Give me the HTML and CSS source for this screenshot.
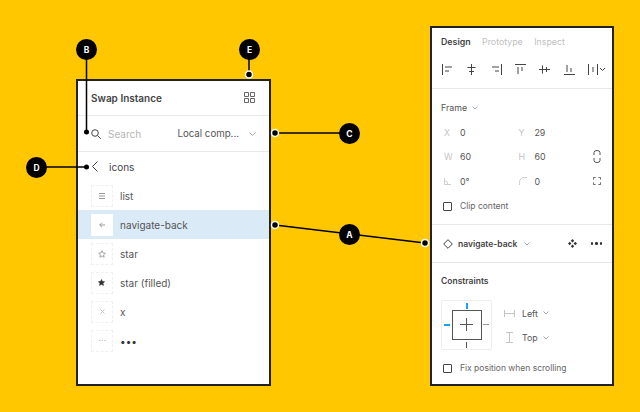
FILE: index.html
```html
<!DOCTYPE html>
<html lang="en">
<head>
<meta charset="utf-8">
<title>Swap Instance</title>
<link rel="stylesheet" href="styles.css">
</head>
<body>
<main class="canvas">
  <section class="panel swap">
    <header class="swap-head">
      <h2>Swap Instance</h2>
      <svg class="grid-icon" width="11" height="11" viewBox="0 0 11 11"><path d="M.5.5h4v4h-4zM6.500.5h4v4h-4zM.5 6.500h4v4h-4zM6.500 6.500h4v4h-4z"/></svg>
    </header>
    <div class="swap-search">
      <svg class="search-icon" width="10" height="10" viewBox="0 0 10 10"><circle cx="4" cy="4" r="3.300"/><path d="M6.500 6.500l3.300 3.300"/></svg>
      <span class="placeholder">Search</span>
      <span class="library">Local comp...</span>
      <svg class="chev" width="7" height="4" viewBox="0 0 7 4"><path d="M.5.5l3 3 3-3"/></svg>
    </div>
    <div class="back-row">
      <svg class="back-icon" width="6" height="11" viewBox="0 0 6 11"><path d="M5.500.5l-5 5 5 5"/></svg>
      <span>icons</span>
    </div>
    <ul class="list">
      <li class="row"><span class="thumb"><svg width="6" height="6" viewBox="0 0 6 6"><path class="g" d="M0 .5h6M0 3h6M0 5.500h6"/></svg></span>list</li>
      <li class="row on"><span class="thumb"><svg width="6" height="6" viewBox="0 0 6 6"><path class="g" d="M6 3H.7M3 .7L.7 3 3 5.300"/></svg></span>navigate-back</li>
      <li class="row"><span class="thumb"><svg width="8" height="8" viewBox="0 0 9 9"><path class="g" d="M4.500.8l1.100 2.500 2.700.3-2 1.800.6 2.700-2.400-1.400-2.400 1.400.6-2.700-2-1.800 2.700-.3z"/></svg></span>star</li>
      <li class="row"><span class="thumb"><svg class="nudge" width="7" height="7" viewBox="0 0 9 9"><path class="f" d="M4.500.8l1.100 2.500 2.700.3-2 1.800.6 2.700-2.400-1.400-2.400 1.400.6-2.700-2-1.800 2.700-.3z"/></svg></span>star (filled)</li>
      <li class="row"><span class="thumb"><svg width="5" height="5" viewBox="0 0 5 5"><path class="l" d="M.5.500l4 4M4.500.5l-4 4"/></svg></span>x</li>
      <li class="row"><span class="thumb"><svg width="7" height="3" viewBox="0 0 7 3"><path class="l" d="M0 1.500h1.500M2.700 1.500h1.500M5.400 1.500h1.500"/></svg></span><span class="dots">•••</span></li>
    </ul>
  </section>

  <section class="panel design">
    <nav class="tabs"><b>Design</b><span>Prototype</span><span>Inspect</span></nav>
    <div class="aligns">
      <svg width="11" height="11" viewBox="0 0 11 11"><path d="M.5 0v11M3 3h7M3 7h4"/></svg>
      <svg width="11" height="11" viewBox="0 0 11 11"><path d="M5.500 0v11M1.500 3.500h8M3 7.500h5"/></svg>
      <svg width="11" height="11" viewBox="0 0 11 11"><path d="M10.500 0v11M1 3h7M4 7h4"/></svg>
      <svg width="11" height="11" viewBox="0 0 11 11"><path d="M0 .5h11M3 3v7M7 3v4"/></svg>
      <svg width="11" height="11" viewBox="0 0 11 11"><path d="M0 5.500h11M3.500 1.500v8M7.500 3v5"/></svg>
      <svg width="11" height="11" viewBox="0 0 11 11"><path d="M0 10.500h11M3 1v7M7 4v4"/></svg>
      <svg width="18" height="11" viewBox="0 0 18 11"><path d="M.5 0v11M9.500 0v11M5 3v5"/><path d="M12 4l2.500 2.500L17 4"/></svg>
    </div>
    <div class="frame">
      <div class="frame-title">Frame <svg class="chev" width="6" height="4" viewBox="0 0 6 4"><path d="M.5.5L3 3 5.500.5"/></svg></div>
      <div class="fields">
        <div class="field"><i>X</i>0</div>
        <div class="field"><i>Y</i>29</div>
        <span></span>
        <div class="field"><i>W</i>60</div>
        <div class="field"><i>H</i>60</div>
        <svg class="side" width="8" height="13" viewBox="0 0 8 13"><path d="M1 5V2.500a3 2 0 0 1 6 0V5M1 8v2.500a3 2 0 0 0 6 0V8"/></svg>
        <div class="field"><i><svg class="mini" width="7" height="7" viewBox="0 0 8 8"><path d="M.5 0v7.500H8M.5 3q3.500 0 4 4.500"/></svg></i>0°</div>
        <div class="field"><i><svg class="mini" width="8" height="8" viewBox="0 0 9 9"><path d="M.5 9V6A5.500 5.500 0 0 1 6 .5h3"/></svg></i>0</div>
        <svg class="side" width="8" height="8" viewBox="0 0 9 9"><path d="M.5 3V.5H3M6 .5h2.500V3M8.500 6v2.500H6M3 8.500H.5V6"/></svg>
      </div>
      <label class="check"><span class="box"></span>Clip content</label>
    </div>
    <div class="instance">
      <svg class="diamond" width="10" height="10" viewBox="0 0 10 10"><path d="M5 .7L9.300 5 5 9.300.7 5z"/></svg>
      <b>navigate-back</b>
      <svg class="chev" width="6" height="4" viewBox="0 0 6 4"><path d="M.5.5L3 3 5.500.5"/></svg>
      <svg class="move" width="9" height="9" viewBox="0 0 9 9"><path d="M4.500 0l1.700 1.700-1.700 1.700-1.700-1.700zM4.500 5.600l1.700 1.700L4.500 9 2.800 7.300zM1.700 2.800l1.700 1.700-1.700 1.700L0 4.500zM7.300 2.800L9 4.500 7.300 6.200 5.600 4.500z"/></svg>
      <span class="more"><i></i><i></i><i></i></span>
    </div>
    <div class="constraints">
      <h3>Constraints</h3>
      <div class="c-body">
        <div class="c-box">
          <span class="inner"><svg width="13" height="13" viewBox="0 0 13 13"><path d="M6.500 0v13M0 6.500h13"/></svg></span>
          <span class="tick t"></span><span class="tick l"></span><span class="tick r"></span><span class="tick b"></span>
        </div>
        <div class="c-opts">
          <div class="c-opt"><svg width="11" height="7" viewBox="0 0 11 7"><path d="M.5 0v7M10.500 0v7M1 3.500h9"/></svg>Left <svg class="chev" width="6" height="4" viewBox="0 0 6 4"><path d="M.5.5L3 3 5.500.5"/></svg></div>
          <div class="c-opt"><svg width="7" height="11" viewBox="0 0 7 11"><path d="M0 .5h7M0 10.500h7M3.500 1v9"/></svg>Top <svg class="chev" width="6" height="4" viewBox="0 0 6 4"><path d="M.5.5L3 3 5.500.5"/></svg></div>
        </div>
      </div>
      <label class="check"><span class="box"></span>Fix position when scrolling</label>
    </div>
  </section>

  <svg class="wires" width="640" height="412" viewBox="0 0 640 412">
    <path d="M86.500 50V132M249 50V74M36 167H86M275 133H350M275 225L425 243"/>
    <g class="ring"><circle cx="249" cy="74.500" r="3.500"/><circle cx="275" cy="133" r="3.500"/><circle cx="275" cy="225" r="3.500"/><circle cx="425" cy="243" r="3.500"/></g>
    <circle class="dot" cx="86.500" cy="132" r="2.500"/><circle class="dot" cx="86.500" cy="167" r="2.500"/>
  </svg>
  <span class="pin pin-a">A</span>
  <span class="pin pin-b">B</span>
  <span class="pin pin-c">C</span>
  <span class="pin pin-d">D</span>
  <span class="pin pin-e">E</span>
</main>
</body>
</html>
```

FILE: styles.css
```css
* { box-sizing: border-box; }
html, body { margin: 0; padding: 0; }
body { width: 640px; height: 412px; overflow: hidden; background: #ffc700; font-family: Inter, "Liberation Sans", sans-serif; color: #444; font-size: 10px; }
ul { list-style: none; margin: 0; padding: 0; }
h2, h3 { margin: 0; font-size: 10px; font-weight: 600; color: #444; }
svg { display: block; flex: none; fill: none; stroke: #555; stroke-width: 1; }
i { font-style: normal; }
.canvas { position: relative; width: 640px; height: 412px; }
.panel { position: absolute; background: #fff; border: 2px solid #222; }

.swap { left: 76px; top: 79px; width: 195px; height: 307px; display: flex; flex-direction: column; }
.swap-head { height: 35px; flex: none; display: flex; align-items: center; justify-content: space-between; padding: 0 14px 1px 13px; border-bottom: 1px solid #e8e8e8; }
.grid-icon { stroke: #666; }
.swap-search { height: 36px; flex: none; display: flex; align-items: center; padding: 0 13px; border-bottom: 1px solid #e8e8e8; }
.search-icon { margin-right: 7px; stroke: #444; }
.placeholder { color: #b5b5b5; }
.library { margin-left: auto; margin-right: 10px; color: #555; font-size: 9.700px; }
.chev { stroke: #aaa; }
.back-row { height: 29px; flex: none; display: flex; align-items: center; padding: 0 14px; gap: 11px; color: #444; }
.back-icon { stroke: #444; }
.list { flex: none; }
.row { height: 29px; display: flex; align-items: center; padding: 0 13px; gap: 7px; color: #555; }
.row.on { background: #daeaf7; }
.thumb { width: 22px; height: 22px; display: flex; align-items: center; justify-content: center; background: #fff; border: 1px dashed #f0f0f0; }
.on .thumb { border-color: #fff; }
.nudge { margin-left: -2px; margin-top: -1px; }
.g { stroke: #999; fill: none; }
.f { fill: #333; stroke: #333; }
.l { stroke: #c4c4c4; }
.dots { color: #333; }

.design { left: 430px; top: 26px; width: 184px; height: 360px; display: flex; flex-direction: column; }
.tabs { height: 26px; flex: none; display: flex; align-items: center; gap: 11.500px; padding: 0 9px; font-size: 8.800px; color: #c0c0c0; }
.tabs b { color: #444; font-weight: 600; }
.aligns { height: 35px; flex: none; display: flex; align-items: center; justify-content: space-between; padding: 0 6px 4px 10px; border-bottom: 1px solid #e8e8e8; }
.aligns svg { stroke: #444; }
.frame { height: 136px; flex: none; padding: 0 9px; border-bottom: 1px solid #e8e8e8; font-size: 8.800px; color: #555; }
.frame-title { height: 37px; display: flex; align-items: center; gap: 5px; }
.fields { display: grid; grid-template-columns: 74.500px 74.500px 1fr; grid-auto-rows: 24.500px; align-items: center; margin-top: -6px; }
.field { display: flex; align-items: center; }
.field i { width: 19px; padding-left: 3px; color: #c4c4c4; flex: none; }
.mini { stroke: #c4c4c4; }
.side { justify-self: center; stroke: #555; }
.check { display: flex; align-items: center; gap: 8px; color: #666; font-size: 8.500px; }
.frame > .check { height: 25px; }
.box { width: 9px; height: 9px; border: 1px solid #444; border-radius: 1px; margin-left: 2px; }
.instance { height: 38px; flex: none; display: flex; align-items: center; padding: 0 10px 0 11px; border-bottom: 1px solid #e8e8e8; font-size: 8.500px; }
.instance b { font-weight: 600; color: #444; margin: 0 7px 0 5px; }
.diamond { stroke: #444; }
.move { margin-left: auto; fill: #333; stroke: none; }
.more { display: flex; gap: 2px; margin-left: 14px; }
.more i { width: 2.500px; height: 2.500px; border-radius: 50%; background: #333; }
.constraints { padding: 13px 9px 0; }
.constraints h3 { font-size: 8.500px; line-height: 11px; }
.c-body { display: flex; margin-top: 13px; }
.c-box { position: relative; width: 51px; height: 50px; padding-bottom: 1px; border: 1px solid #eee; border-radius: 2px; display: flex; align-items: center; justify-content: center; }
.inner { width: 30px; height: 30px; border: 1.500px solid #555; display: flex; align-items: center; justify-content: center; }
.tick { position: absolute; background: #555; }
.tick.t { left: 24px; top: 2px; width: 2px; height: 6px; background: #18a0fb; }
.tick.l { left: 2px; top: 23px; width: 6px; height: 2px; background: #18a0fb; }
.tick.r { right: 2px; top: 23px; width: 6px; height: 1px; background: #999; }
.tick.b { left: 24px; bottom: 1px; width: 1px; height: 6px; background: #555; }
.c-opts { margin-left: 12px; display: flex; flex-direction: column; gap: 8.600px; padding-top: 5px; }
.c-opt { height: 16px; display: flex; align-items: center; color: #555; font-size: 8.800px; gap: 7px; }
.c-opt > svg:first-child { stroke: #c4c4c4; width: 11px; }
.c-opt > .chev { margin-left: -2px; }
.constraints > .check { margin-top: 11px; height: 14px; }

.wires { position: absolute; left: 0; top: 0; }
.wires path { stroke: #000; stroke-width: 1.500; fill: none; }
.ring circle { fill: #000; stroke: #fff; stroke-width: 1.500; }
.dot { fill: #000; stroke: none; }
.pin { position: absolute; width: 21px; height: 21px; border-radius: 50%; background: #000; color: #fff; font-size: 8.500px; font-weight: 700; display: flex; align-items: center; justify-content: center; }
.pin-a { left: 339px; top: 224px; }
.pin-b { left: 76px; top: 39px; }
.pin-c { left: 339px; top: 123px; }
.pin-d { left: 26px; top: 157px; }
.pin-e { left: 239px; top: 39px; }
```
